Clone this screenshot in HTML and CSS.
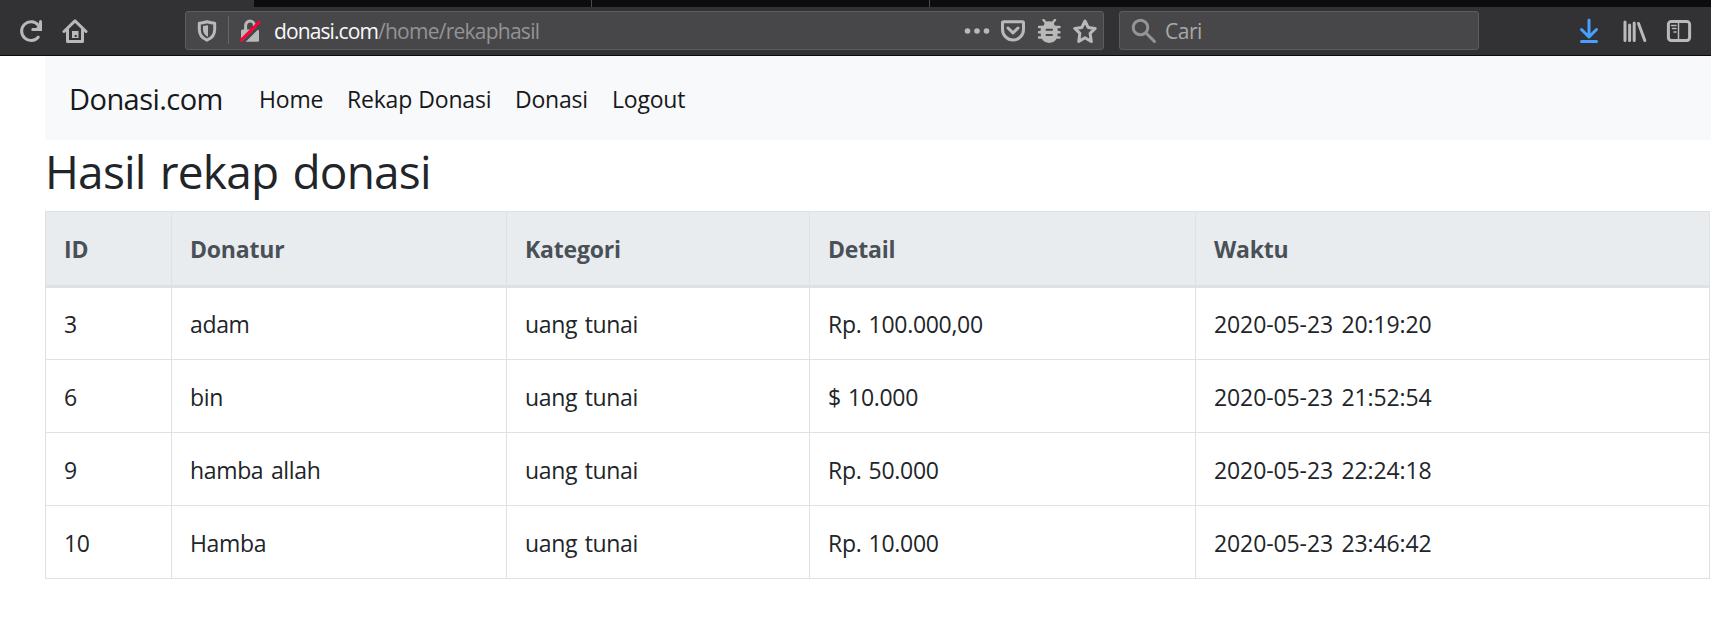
FILE: index.html
```html
<!DOCTYPE html>
<html lang="id">
<head>
<meta charset="utf-8">
<title>Hasil rekap donasi</title>
<link rel="stylesheet" href="styles.css">
</head>
<body>
<header class="browser">
  <div class="tabstrip"><span class="tab"></span><span class="tab tab-dark"></span><span class="tab tab-dark"></span><span class="tab tab-rest"></span></div>
  <div class="toolbar">
    <svg class="icon reload" viewBox="18 19 25 25"><path d="M38.2 37.2A9.4 9.4 0 1 1 38.3 25.2" /><path class="solid" d="M39 21.5q0-1.5 1.5-1.5T42 21.5V31H32.500q-1.200 0-1.200-1.500t1.200-1.500H36L39 25z"/></svg>
    <svg class="icon home" viewBox="62 19 26 25"><path d="M64 31.500 75 20.800 86 31.500M67.500 29.500V41.500H82.500V29.500"/><path class="solid" fill-rule="evenodd" d="M72 31h6.500v7H72zM74.700 35v2h2v-2z"/></svg>
    <div class="urlbar">
      <svg class="icon shield" viewBox="195 19 24 24"><path d="M207 21.800q4.500 1.300 7.700 1.500V29.500q0 7.500-7.700 10.700-7.700-3.200-7.700-10.700V23.300q3.200-.2 7.700-1.500z"/><path class="solid" d="M208 25.300V37q-5-2.500-5-8V26z"/></svg>
      <span class="divider"></span>
      <svg class="icon lock" viewBox="239 19 24 24"><path d="M245.600 31V25.500a4.400 4.400 0 0 1 8.800 0V31"/><rect class="solid" x="241" y="29.500" width="18" height="12.300" rx="1.500"/><path class="gap" d="M243.300 42 262 23.500"/><path class="slash" d="M241.300 40 259.200 22.200"/></svg>
      <span class="url"><b class="host">donasi.com</b><span class="path">/home/rekaphasil</span></span>
      <svg class="icon dots" viewBox="964 19 26 24"><g class="solid"><circle cx="967.500" cy="31" r="2.800"/><circle cx="977" cy="31" r="2.800"/><circle cx="986.500" cy="31" r="2.800"/></g></svg>
      <svg class="icon pocket" viewBox="1000 19 26 24"><path d="M1003.700 21.700H1022.300Q1023.500 21.700 1023.500 23V29.500a10.500 10.500 0 0 1-21 0V23Q1002.500 21.700 1003.700 21.700z"/><path d="m1008 28 5 4.800 5-4.800"/></svg>
      <svg class="icon bug" viewBox="1037 19 24 24"><path class="legs" d="m1043.500 20 3 3.500m8.500-3.500-3 3.500M1039 27H1059.500M1039 32.300H1059.500M1039 37.500H1059.500"/><path class="solid" d="M1049.200 21.300q5 0 5.200 4 3.500 1 3.500 6.500 0 11.200-8.700 11.200t-8.700-11.200q0-5.500 3.500-6.500.2-4 5.200-4z"/><path class="cut" d="M1046.500 29.800h5.500M1046.500 35h5.500"/></svg>
      <svg class="icon star" viewBox="1072 19 26 25"><path d="m1085 21 3.100 6.400 7.100 1-5.100 4.900 1.200 8.200-6.300-3.800-6.300 3.800 1.200-8.200-5.100-4.900 7.100-1z"/></svg>
    </div>
    <div class="searchbar">
      <svg class="icon magnifier" viewBox="1131 18 26 26"><circle cx="1140.500" cy="27.500" r="7.300"/><path d="m1146 33 8.500 8.500"/></svg>
      <span class="hint">Cari</span>
    </div>
    <svg class="icon download" viewBox="1578 18 22 26"><path d="M1589 20V37M1581.500 29.500 1589 37l7.500-7.500M1581.500 41.500h15"/></svg>
    <svg class="icon library" viewBox="1622 19 26 24"><path d="M1625 22V40.500M1629.600 25V40.500M1634.200 23V40.500M1638.500 23.500 1644.800 40.500"/></svg>
    <svg class="icon sidebar" viewBox="1666 19 26 24"><rect x="1668.400" y="21.400" width="21.200" height="19" rx="2.800"/><path class="thin" d="M1678.500 22V40M1671.500 25.500h4.500M1672.500 28.600h3.500M1674 32h2"/></svg>
  </div>
</header>
<main class="page">
  <nav class="navbar">
    <a class="brand">Donasi.com</a>
    <a class="link nav-home">Home</a>
    <a class="link nav-rekap">Rekap Donasi</a>
    <a class="link nav-donasi">Donasi</a>
    <a class="link">Logout</a>
  </nav>
  <h1 class="title">Hasil rekap donasi</h1>
  <table class="table">
    <colgroup><col class="c-id"><col class="c-name"><col class="c-cat"><col class="c-detail"><col class="c-time"></colgroup>
    <thead><tr><th>ID</th><th>Donatur</th><th>Kategori</th><th>Detail</th><th>Waktu</th></tr></thead>
    <tbody>
      <tr><td class="num">3</td><td>adam</td><td>uang tunai</td><td class="num">Rp. 100.000,00</td><td class="time">2020-05-23 20:19:20</td></tr>
      <tr><td class="num">6</td><td>bin</td><td>uang tunai</td><td class="num">$ 10.000</td><td class="time">2020-05-23 21:52:54</td></tr>
      <tr><td class="num">9</td><td>hamba allah</td><td>uang tunai</td><td class="num">Rp. 50.000</td><td class="time">2020-05-23 22:24:18</td></tr>
      <tr><td class="num">10</td><td>Hamba</td><td>uang tunai</td><td class="num">Rp. 10.000</td><td class="time">2020-05-23 23:46:42</td></tr>
    </tbody>
  </table>
</main>
</body>
</html>
```

FILE: styles.css
```css
* { box-sizing: border-box; }
body { margin: 0; background: #fff; color: #212529; font-family: "Open Sans", "Noto Sans", sans-serif; overflow: hidden; }

/* Browser chrome */
.browser { height: 56px; background: #323234; border-bottom: 1px solid #0c0c0d; }
.tabstrip { display: flex; height: 7px; }
.tab { width: 254px; }
.tab-dark { width: 338px; background: #0c0c0d; border-right: 1px solid #4a4a4f; }
.tab-rest { flex: 1; background: #0c0c0d; }
.toolbar { display: flex; align-items: flex-start; height: 48px; padding: 4px 0 0 18px; }
.icon { display: block; flex: none; fill: none; stroke: #b9b9ba; stroke-width: 3; stroke-linecap: round; stroke-linejoin: round; }
.icon .solid { fill: #b9b9ba; stroke: none; }
.reload { width: 25px; height: 25px; margin-top: 8px; }
.home { width: 26px; height: 25px; margin: 8px 97px 0 19px; }
.urlbar, .searchbar { display: flex; height: 39px; background: #474749; border: 1px solid #5c5c5e; border-radius: 3px; padding-top: 7px; }
.urlbar { width: 919px; padding-left: 9px; }
.shield { width: 24px; height: 24px; }
.divider { width: 1px; height: 28px; margin: -3px 10px 0 9px; background: #5f6670; }
.lock { width: 24px; height: 24px; }
.lock .gap { stroke: #474749; }
.lock .slash { stroke: #ff0039; }
.url { display: block; width: 689px; margin: -3px 0 0 11px; font-size: 21px; line-height: 30px; white-space: nowrap; color: #939395; }
.host { font-weight: 400; color: #f9f9fa; letter-spacing: -0.9px; }
.path { letter-spacing: -0.75px; }
.dots { width: 26px; height: 24px; margin-left: 1px; }
.pocket { width: 26px; height: 24px; margin-left: 10px; }
.bug { width: 24px; height: 24px; margin-left: 11px; }
.bug .legs { stroke-width: 2.4; }
.bug .cut { stroke: #474749; stroke-width: 2; }
.star { width: 26px; height: 25px; margin-left: 11px; }
.searchbar { width: 360px; margin-left: 15px; padding: 6px 0 0 11px; }
.magnifier { width: 26px; height: 26px; stroke: #949496; }
.hint { margin: -2px 0 0 8px; font-size: 21px; line-height: 30px; letter-spacing: -0.5px; color: #a9a9aa; }
.download { width: 22px; height: 26px; margin: 7px 0 0 99px; stroke: #45a1ff; }
.library { width: 26px; height: 24px; margin: 8px 0 0 22px; }
.sidebar { width: 26px; height: 24px; margin: 8px 0 0 18px; }
.sidebar .thin { stroke-width: 1.5; }

/* Page */
.page { padding-left: 45px; }
.navbar { display: flex; align-items: flex-start; height: 84px; padding: 22px 0 0 24px; background: #f8f9fb; color: #17181a; line-height: 42px; white-space: nowrap; }
.brand { width: 190px; font-size: 29px; letter-spacing: -0.55px; }
.link { font-size: 23px; letter-spacing: -0.2px; word-spacing: 0.5px; }
.nav-home { width: 88px; }
.nav-rekap { width: 168px; }
.nav-donasi { width: 97px; }
.title { height: 57px; margin: 3px 0 10px; font-size: 46px; line-height: 57px; font-weight: 400; letter-spacing: -0.8px; word-spacing: 3px; }
.table { width: 1665px; margin-top: 11px; table-layout: fixed; border-collapse: collapse; font-size: 23px; }
.c-id { width: 126px; }
.c-name { width: 335px; }
.c-cat { width: 303px; }
.c-detail { width: 386px; }
.table th, .table td { height: 73px; padding: 1px 18px 0; border: 1px solid #dee2e6; text-align: left; line-height: 36px; letter-spacing: -0.35px; word-spacing: 2px; }
.table th { height: 75px; background: #e9ecef; color: #495057; border-bottom-width: 3px; font-weight: 700; letter-spacing: -0.2px; }
.table .num { letter-spacing: -0.3px; word-spacing: 1.5px; }
.table .time { letter-spacing: -0.1px; word-spacing: 2.5px; }
```
